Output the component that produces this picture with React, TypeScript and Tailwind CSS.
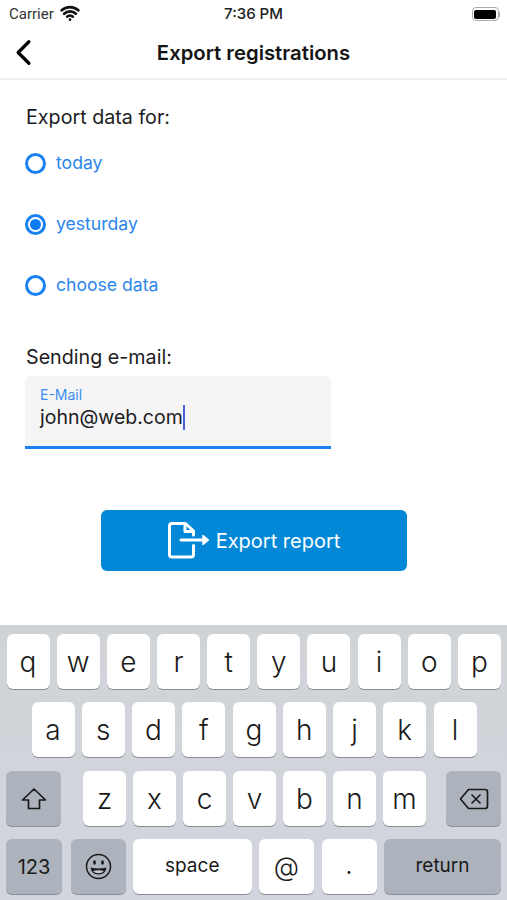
import React from 'react';
import { ChevronLeft, Wifi } from 'lucide-react';

const Key = ({ label, className = 'w-[43px] bg-white text-[28px] font-light' }: { label: React.ReactNode; className?: string }) => (
  <div className={`h-[55px] rounded-[6px] flex items-center justify-center text-[#1a1a1a] shadow-[0_1px_0_#8b8e94] ${className}`}>
    {label}
  </div>
);

const Radio = ({ label, checked = false }: { label: string; checked?: boolean }) => (
  <div className="h-[61px] flex items-center">
    <div className="w-[21px] h-[21px] rounded-full border-[3px] border-[#1a82f0] flex items-center justify-center">
      {checked && <div className="w-[11px] h-[11px] rounded-full bg-[#0a7af5]" />}
    </div>
    <span className="ml-[10px] text-[17.6px] text-[#2a86ec]">{label}</span>
  </div>
);

const ExportIcon = () => (
  <svg width="42" height="37" viewBox="0 0 42 37" fill="none" stroke="white" strokeWidth="3" strokeLinejoin="round" strokeLinecap="round">
    <path d="M25.5 13V9L17.5 1.5H4Q1.5 1.5 1.5 4V32.5Q1.5 35 4 35H23Q25.5 35 25.5 32.5V23.5" />
    <path d="M17 2V9.5H25" />
    <path d="M13 18H36" />
    <path d="M35 13.5L40.5 18L35 22.5Z" fill="white" strokeWidth="1.5" />
  </svg>
);

const ShiftIcon = () => (
  <svg width="26" height="24" viewBox="0 0 26 24" fill="none" stroke="#1a1a1a" strokeWidth="1.7" strokeLinejoin="round">
    <path d="M13 2L24.5 13H18.5V21.5H7.5V13H1.5Z" />
  </svg>
);

const BackspaceIcon = () => (
  <svg width="30" height="22" viewBox="0 0 30 22" fill="none" stroke="#1a1a1a" strokeWidth="1.7" strokeLinejoin="round" strokeLinecap="round">
    <path d="M9.5 1.5H26Q28.5 1.5 28.5 4V18Q28.5 20.5 26 20.5H9.5L1.5 11Z" />
    <path d="M13 7L21 15M21 7L13 15" />
  </svg>
);

const EmojiIcon = () => (
  <svg width="27" height="27" viewBox="0 0 27 27" fill="none" stroke="#1a1a1a" strokeWidth="1.5">
    <circle cx="13.5" cy="13.5" r="12" />
    <ellipse cx="9.5" cy="9.5" rx="1.4" ry="2.2" fill="#1a1a1a" stroke="none" />
    <ellipse cx="17.5" cy="9.5" rx="1.4" ry="2.2" fill="#1a1a1a" stroke="none" />
    <path d="M5.5 14.5Q13.5 16.5 21.5 14.5Q20.5 21.5 13.5 21.5Q6.5 21.5 5.5 14.5Z" fill="#1a1a1a" stroke="none" />
    <path d="M8 18Q13.5 16.5 19 18Q17 20.3 13.5 20.3Q10 20.3 8 18Z" fill="#c4c7cf" stroke="none" />
  </svg>
);

export default function App() {
  const row1 = ['q', 'w', 'e', 'r', 't', 'y', 'u', 'i', 'o', 'p'];
  const row2 = ['a', 's', 'd', 'f', 'g', 'h', 'j', 'k', 'l'];
  const row3 = ['z', 'x', 'c', 'v', 'b', 'n', 'm'];
  const dark = 'bg-[#adb3bd]';

  return (
    <div className="w-[507px] h-[900px] bg-white flex flex-col overflow-hidden font-['Inter',sans-serif] text-[#1c1c1e]">
      {/* status bar */}
      <div className="h-[28px] flex items-center justify-between pl-[9px] pr-[7px] relative">
        <div className="flex items-center gap-[6px] text-[15px] text-[#333] font-['Roboto',sans-serif]">
          Carrier
          <Wifi size={20} strokeWidth={3.2} className="text-[#111] -mt-[3px]" />
        </div>
        <span className="absolute left-0 right-0 text-center text-[15px] font-medium text-[#222]">7:36 PM</span>
        <div className="flex items-center">
          <div className="w-[27px] h-[14px] rounded-[4px] border border-[#aaa] p-[1.5px]">
            <div className="w-full h-full rounded-[2px] bg-black" />
          </div>
          <div className="w-[1.5px] h-[5px] bg-[#aaa]" />
        </div>
      </div>

      {/* nav bar */}
      <div className="h-[52px] flex items-center justify-center relative border-b-2 border-[#eeeeee]">
        <ChevronLeft size={43} strokeWidth={1.8} className="absolute left-[2px] top-[3px] text-black" />
        <span className="text-[20.3px] font-semibold text-[#141414]">Export registrations</span>
      </div>

      {/* form */}
      <div className="flex-1 pl-[25px] pt-[25px] flex flex-col">
        <div className="text-[19.7px] leading-[24px] ml-px">Export data for:</div>
        <div className="mt-[4px]">
          <Radio label="today" />
          <Radio label="yesturday" checked />
          <Radio label="choose data" />
        </div>
        <div className="text-[19.7px] leading-[24px] mt-[29px] ml-px">Sending e-mail:</div>
        <div className="w-[306px] h-[73px] mt-[7px] bg-[#f5f5f6] rounded-t-[5px] border-b-[3px] border-[#1a82f0] pl-[15px] pt-[11px]">
          <div className="text-[14px] leading-[16px] text-[#3a8eee]">E-Mail</div>
          <div className="flex items-center text-[19.5px] leading-[30px] -mt-px">
            john@web.com
            <div className="w-[2.5px] h-[25px] bg-[#4a5fd8]" />
          </div>
        </div>
        <div className="w-[306px] h-[61px] ml-[76px] mt-[61px] bg-[#0288d6] rounded-[6px] flex items-center justify-center gap-[6px] text-white text-[20px]">
          <ExportIcon />
          Export report
        </div>
      </div>

      {/* keyboard */}
      <div className="h-[275px] bg-gradient-to-b from-[#d0d3d6] to-[#d2d5de] pt-[9px] px-[6px] flex flex-col gap-[13px] shrink-0">
        <div className="flex justify-between pl-[0.5px]">
          {row1.map((k) => <Key key={k} label={k} />)}
        </div>
        <div className="flex justify-center gap-[7.25px] pl-px">
          {row2.map((k) => <Key key={k} label={k} />)}
        </div>
        <div className="flex justify-between mt-px">
          <Key label={<ShiftIcon />} className={`w-[55px] ${dark}`} />
          <div className="flex gap-[7px] ml-[2px]">
            {row3.map((k) => <Key key={k} label={k} />)}
          </div>
          <Key label={<BackspaceIcon />} className={`w-[55px] ${dark}`} />
        </div>
        <div className="flex gap-[7.5px]">
          <Key label="123" className={`w-[56px] text-[20px] ${dark}`} />
          <Key label={<EmojiIcon />} className={`w-[55px] ml-[1px] ${dark}`} />
          <Key label="space" className="w-[118.5px] bg-white text-[19px]" />
          <Key label="@" className="w-[55px] bg-white text-[26px] font-light" />
          <Key label="." className="w-[55px] bg-white text-[22px]" />
          <Key label="return" className={`flex-1 text-[19px] ${dark}`} />
        </div>
      </div>
    </div>
  );
}
